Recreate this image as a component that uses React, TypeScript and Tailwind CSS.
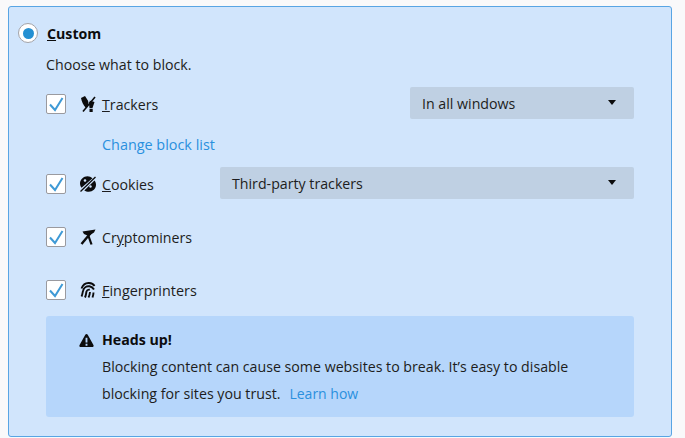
import { ReactNode } from "react";

const CheckBox = () => (
  <span className="flex size-5 shrink-0 items-center justify-center rounded-[2px] border border-[#9a9a9f] bg-white">
    <svg viewBox="0 0 18 18" className="size-[18px]" fill="none">
      <path d="M3 9.500 L8 15 L15.500 3" stroke="#3f9ad6" strokeWidth="2" />
    </svg>
  </span>
);

const TrackerIcon = () => (
  <svg viewBox="0 0 16 16" className="size-4">
    <path d="M1 2 5 0l3.500 5.500-.5 5.500-2.500.5C3.500 9 1.500 5.500 1 2ZM9.500 4.500l5 1.500-2 6H9.500L9 8ZM9.500 12.800h3.200V16H9.500Z" fill="#0c0c0d" />
    <path d="M3 15.500 15 1" stroke="#0c0c0d" strokeWidth="1.600" />
    <path d="M8.500 6 13 1" stroke="#d1e5fc" strokeWidth="1" />
  </svg>
);

const CookieIcon = () => (
  <svg viewBox="0 0 16 16" className="size-4">
    <path d="M7.500.200C3.500.200 0 3.500 0 7.500c0 1.500.5 3 1.500 4.200L12.500 2.200C11 .900 9.300.200 7.500.200ZM14.500 4.500 4.300 14.500c1.200.8 2.800 1.300 4.500 1.300 4 0 7.200-3 7.200-7 0-1.600-.5-3-1.500-4.300Z" fill="#0c0c0d" />
    <path d="M.500 15.500 15.500 1" stroke="#0c0c0d" strokeWidth="1.300" />
    <circle cx="5" cy="4.500" r="1.300" fill="#d1e5fc" />
    <circle cx="10.500" cy="10.500" r="1.200" fill="#d1e5fc" />
  </svg>
);

const MinerIcon = () => (
  <svg viewBox="0 0 16 16" className="size-4">
    <path d="M2.500 2.500 15.500 .500 14 3.500 8.500 7 4 5Z" fill="#0c0c0d" />
    <path d="M1.500 15 11.500 3" stroke="#0c0c0d" strokeWidth="2.400" />
    <path d="M8.500 7 11.500 15.500" stroke="#0c0c0d" strokeWidth="2.200" />
  </svg>
);

const FingerprintIcon = () => (
  <svg viewBox="0 0 16 16" className="size-4" fill="none" stroke="#0c0c0d" strokeWidth="1.900">
    <path d="M1.500 6.500C3 2.500 6 .800 9 1c2.500.2 4.500 1.200 5.500 3" />
    <path d="M1.500 14.500c1-2 1-4 1.500-5.500C3.700 5.700 6.500 3.800 9.500 4.300c1.800.3 3.500 1.500 4.500 3.200" />
    <path d="M5 15.500c1-2 1-4 1.500-6 .4-1.300 2-2 3.300-1.800" />
    <path d="M8.500 15.500c1-1.800 1.300-3.500 1.500-5.500" />
    <path d="M12.500 15.500c.6-1.500.9-3 1-5" />
  </svg>
);

const WarningIcon = () => (
  <svg viewBox="0 0 16 16" className="size-[15px]">
    <path
      fillRule="evenodd"
      d="M8 1c-.5 0-1 .3-1.300.8L.6 12.700C0 13.800.7 15 1.900 15h12.200c1.200 0 1.900-1.200 1.300-2.300L9.300 1.800C9 1.300 8.500 1 8 1ZM7 5h2v5H7Zm0 6.500h2v2H7Z"
      fill="#0c0c0d"
    />
  </svg>
);

const Select = ({ label, className }: { label: string; className: string }) => (
  <div className={`flex h-8 items-center justify-between rounded-[2px] bg-[#bfd0e3] pl-3 pr-[18px] ${className}`}>
    <span className="mt-[2px]">{label}</span>
    <span className="-mt-[2px] h-0 w-0 border-x-[4px] border-t-[5px] border-x-transparent border-t-[#0c0c0d]" />
  </div>
);

const Row = ({ icon, label, children }: { icon: ReactNode; label: ReactNode; children?: ReactNode }) => (
  <div className="flex h-8 items-center">
    <div className="flex items-center pt-[2px]">
      <CheckBox />
      <span className="ml-[14px] flex w-4 justify-center">{icon}</span>
      <span className="ml-2 mt-[2px] whitespace-nowrap leading-none">{label}</span>
    </div>
    {children}
  </div>
);

export default function App() {
  return (
    <div className="h-[438px] w-[685px] overflow-hidden bg-[#f9f9fa] pl-2 pr-[13px] pt-[6px] font-['Open_Sans',sans-serif] text-[14.2px] text-[#1d1d20]">
      <div className="h-[431px] rounded-[3px] border border-[#58a5e4] bg-[#d1e5fc] pl-[9px] pr-[37px] pt-[14px]">
        <div className="flex h-6 items-center">
          <span className="flex size-5 items-center justify-center rounded-full border border-[#a3a3a8] bg-white">
            <span className="size-[11px] rounded-full bg-[#2590d2]" />
          </span>
          <span className="ml-[9px] mt-[2px] font-bold text-[#0c0c0d]">
            <u>C</u>ustom
          </span>
        </div>
        <div className="ml-[28px] mt-[8px] leading-[24px]">Choose what to block.</div>

        <div className="ml-[28px] mt-[10px]">
          <Row icon={<TrackerIcon />} label={<span className="-ml-[2px]"><u>T</u>rackers</span>}>
            <Select label="In all windows" className="ml-auto w-[224px]" />
          </Row>
          <a className="ml-[56px] mt-[14px] block h-[34px] text-[14.4px] leading-[24px] text-[#2a90de]">Change block list</a>
          <Row icon={<CookieIcon />} label={<span className="-ml-[2px]"><u>C</u>ookies</span>}>
            <Select label="Third-party trackers" className="ml-auto w-[414px]" />
          </Row>
          <div className="mt-[21px]">
            <Row icon={<MinerIcon />} label={<span className="-ml-[2px]">Cr<u>y</u>ptominers</span>} />
          </div>
          <div className="mt-[21px]">
            <Row icon={<FingerprintIcon />} label={<span className="-ml-[2px] text-[14.4px]"><u>F</u>ingerprinters</span>} />
          </div>
          <div className="mt-[11px] h-[101px] rounded-[3px] bg-[#b6d6fb] pl-[33px] pr-4 pt-[12px]">
            <div className="flex h-6 items-center">
              <span className="flex w-[15px]"><WarningIcon /></span>
              <span className="ml-2 font-bold text-[#0c0c0d]">Heads up!</span>
            </div>
            <div className="ml-[23px] mt-[1px] leading-[27px]">
              <div>Blocking content can cause some websites to break. It’s easy to disable</div>
              <div className="flex gap-[9px]">
                <span>blocking for sites you trust.</span>
                <a className="text-[14px] text-[#2a90de]">Learn how</a>
              </div>
            </div>
          </div>
        </div>
      </div>
    </div>
  );
}
